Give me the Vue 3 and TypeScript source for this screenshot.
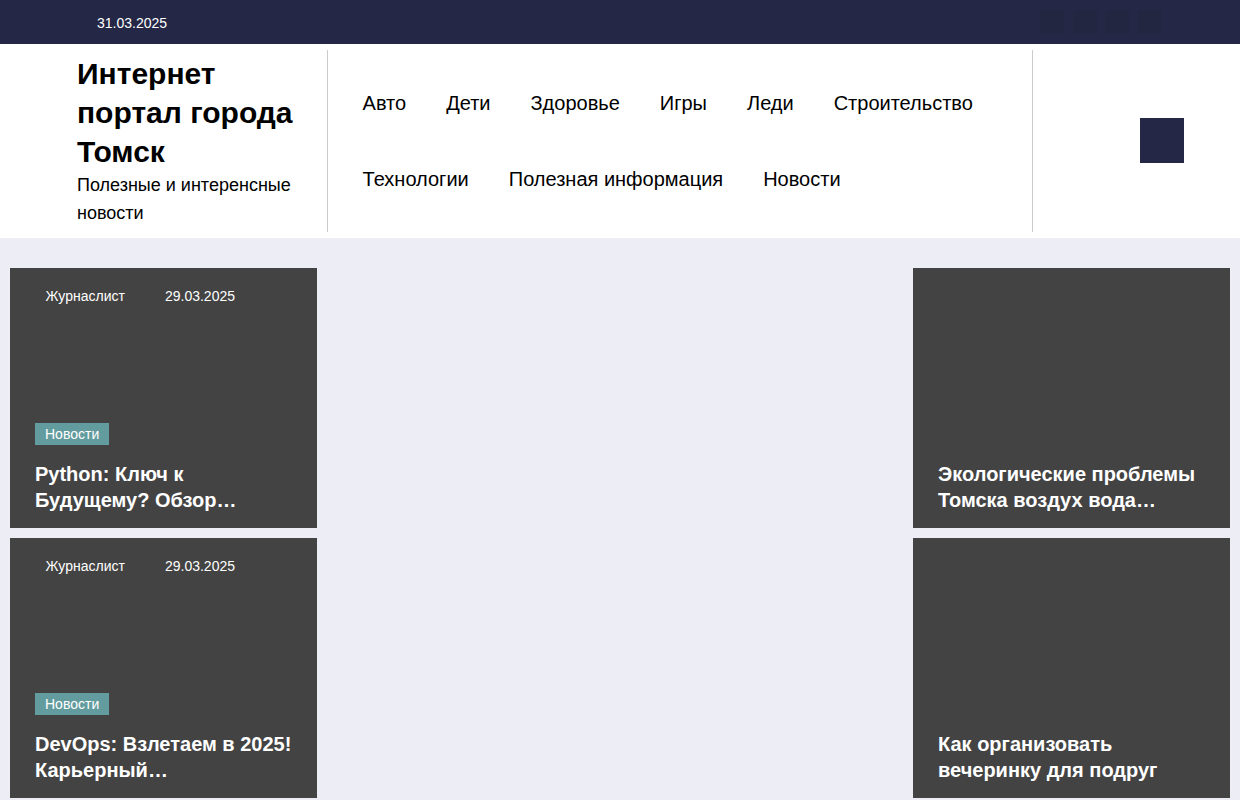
<template>
  <div class="page">
    <div class="topbar">
      <span class="topbar-date">31.03.2025</span>
      <div class="socials">
        <a v-for="n in 4" :key="n" class="social"></a>
      </div>
    </div>

    <header class="header">
      <div class="brand">
        <div class="brand-title">Интернет портал города Томск</div>
        <div class="brand-sub">Полезные и интеренсные новости</div>
      </div>
      <nav class="nav">
        <a v-for="item in menu" :key="item" class="nav-link">{{ item }}</a>
      </nav>
      <div class="header-side">
        <button class="menu-btn"></button>
      </div>
    </header>

    <main class="grid">
      <template v-for="row in rows" :key="row.left.title">
        <article class="card">
          <div class="card-meta">
            <span>{{ row.left.author }}</span>
            <span>{{ row.left.date }}</span>
          </div>
          <div class="card-bottom">
            <span class="tag">{{ row.left.tag }}</span>
            <h3 class="card-title">{{ row.left.title }}</h3>
          </div>
        </article>
        <div></div>
        <article class="card">
          <div class="card-bottom">
            <h3 class="card-title">{{ row.right }}</h3>
          </div>
        </article>
      </template>
    </main>
  </div>
</template>

<script setup lang="ts">
const menu = [
  'Авто',
  'Дети',
  'Здоровье',
  'Игры',
  'Леди',
  'Строительство',
  'Технологии',
  'Полезная информация',
  'Новости'
]

const rows = [
  {
    left: {
      author: 'Журнаслист',
      date: '29.03.2025',
      tag: 'Новости',
      title: 'Python: Ключ к Будущему? Обзор…'
    },
    right: 'Экологические проблемы Томска воздух вода…'
  },
  {
    left: {
      author: 'Журнаслист',
      date: '29.03.2025',
      tag: 'Новости',
      title: 'DevOps: Взлетаем в 2025! Карьерный…'
    },
    right: 'Как организовать вечеринку для подруг'
  }
]
</script>

<style>
body {
  margin: 0;
  background: #edeef5;
}
</style>

<style scoped>
.page {
  font-family: "Liberation Sans", Arial, sans-serif;
  color: #000;
}

.topbar {
  display: flex;
  justify-content: space-between;
  align-items: center;
  height: 44px;
  padding: 0 78px 0 97px;
  box-sizing: border-box;
  background: #242846;
}

.topbar-date {
  margin-top: 2px;
  font-size: 14px;
  color: #fff;
}

.socials {
  display: flex;
  gap: 8.6px;
}

.social {
  width: 24px;
  height: 24px;
  background: #232640;
}

.header {
  display: grid;
  grid-template-columns: 328px 705px 1fr;
  padding: 6px 0;
  background: #fff;
}

.brand {
  display: flex;
  flex-direction: column;
  justify-content: center;
  padding: 4px 30px 5px 77px;
  border-right: 1px solid #ccc;
}

.brand-title {
  font-size: 30px;
  font-weight: 700;
  line-height: 39px;
}

.brand-sub {
  font-size: 18px;
  line-height: 28px;
}

.nav {
  display: flex;
  flex-wrap: wrap;
  align-items: center;
  align-content: center;
  padding: 0 14.6px;
  border-right: 1px solid #ccc;
}

.nav-link {
  padding: 0 20px;
  font-size: 20px;
  line-height: 76px;
}

.header-side {
  display: flex;
  justify-content: flex-end;
  align-items: center;
  padding: 0 56px 1px 0;
}

.menu-btn {
  width: 44px;
  height: 45px;
  padding: 0;
  border: none;
  background: #242846;
}

.grid {
  display: grid;
  grid-template-columns: 307px 1fr 317px;
  grid-auto-rows: 260px;
  gap: 10px;
  padding: 30px 10px 2px;
}

.card {
  display: flex;
  flex-direction: column;
  justify-content: space-between;
  padding: 20px 25px 15px;
  box-sizing: border-box;
  background: #434343;
  color: #fff;
}

.card-meta {
  display: flex;
  gap: 40px;
  padding-left: 10.6px;
  font-size: 14px;
  line-height: 16px;
}

.card-bottom {
  margin-top: auto;
}

.tag {
  display: inline-block;
  padding: 0 10px;
  font-size: 14px;
  line-height: 22px;
  background: #639c9e;
  vertical-align: top;
}

.card-title {
  margin: 16px 0 0;
  font-size: 20px;
  font-weight: 700;
  line-height: 26px;
}
</style>
